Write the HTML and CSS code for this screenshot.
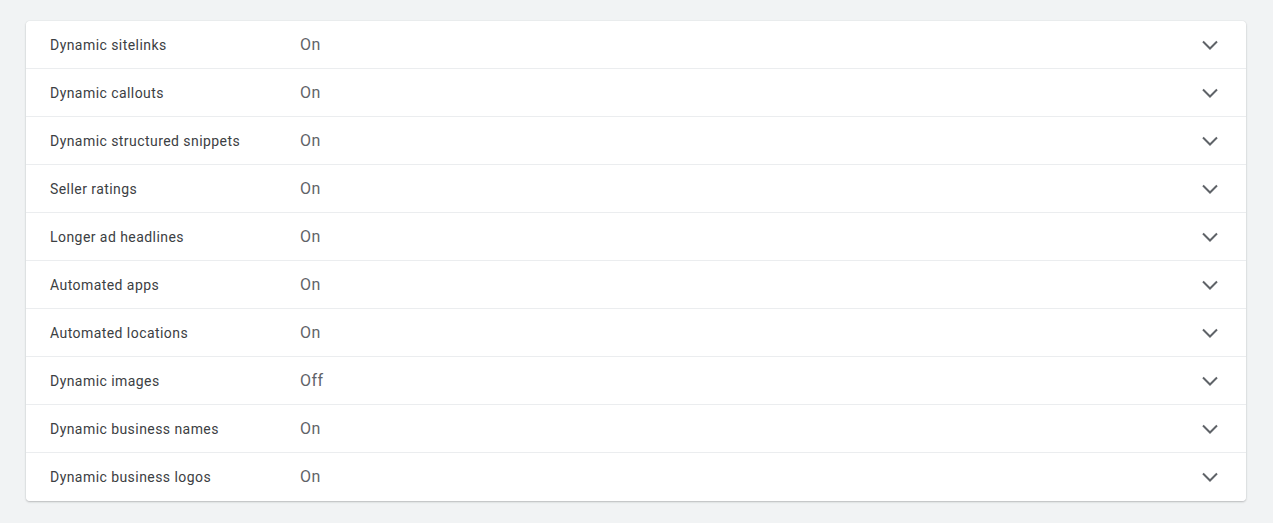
FILE: index.html
```html
<!DOCTYPE html>
<html>
<head>
<meta charset="utf-8">
<link rel="stylesheet" href="styles.css">
</head>
<body>
<div class="panels">
  <div class="row"><span class="label">Dynamic sitelinks</span><span class="value">On</span><svg class="chev" viewBox="0 0 24 24"><polyline points="5,8.5 12,15.5 19,8.5"/></svg></div>
  <div class="row"><span class="label">Dynamic callouts</span><span class="value">On</span><svg class="chev" viewBox="0 0 24 24"><polyline points="5,8.5 12,15.5 19,8.5"/></svg></div>
  <div class="row"><span class="label">Dynamic structured snippets</span><span class="value">On</span><svg class="chev" viewBox="0 0 24 24"><polyline points="5,8.5 12,15.5 19,8.5"/></svg></div>
  <div class="row"><span class="label">Seller ratings</span><span class="value">On</span><svg class="chev" viewBox="0 0 24 24"><polyline points="5,8.5 12,15.5 19,8.5"/></svg></div>
  <div class="row"><span class="label">Longer ad headlines</span><span class="value">On</span><svg class="chev" viewBox="0 0 24 24"><polyline points="5,8.5 12,15.5 19,8.5"/></svg></div>
  <div class="row"><span class="label">Automated apps</span><span class="value">On</span><svg class="chev" viewBox="0 0 24 24"><polyline points="5,8.5 12,15.5 19,8.5"/></svg></div>
  <div class="row"><span class="label">Automated locations</span><span class="value">On</span><svg class="chev" viewBox="0 0 24 24"><polyline points="5,8.5 12,15.5 19,8.5"/></svg></div>
  <div class="row"><span class="label">Dynamic images</span><span class="value">Off</span><svg class="chev" viewBox="0 0 24 24"><polyline points="5,8.5 12,15.5 19,8.5"/></svg></div>
  <div class="row"><span class="label">Dynamic business names</span><span class="value">On</span><svg class="chev" viewBox="0 0 24 24"><polyline points="5,8.5 12,15.5 19,8.5"/></svg></div>
  <div class="row"><span class="label">Dynamic business logos</span><span class="value">On</span><svg class="chev" viewBox="0 0 24 24"><polyline points="5,8.5 12,15.5 19,8.5"/></svg></div>
</div>
</body>
</html>
```
FILE: styles.css
```css
html, body {
  margin: 0;
  background: #f1f3f4;
  font-family: Roboto, "Liberation Sans", Arial, sans-serif;
}
body {
  padding: 21px 27px 22px 26px;
}
.panels {
  display: flex;
  flex-direction: column;
  border-radius: 4px;
  box-shadow: 0 1px 2px rgba(60,64,67,.3), 0 0 1px rgba(60,64,67,.2);
}
.row {
  display: flex;
  align-items: center;
  height: 48px;
  padding: 0 24px 0 24px;
  background: #fff;
  box-shadow: inset 0 -1px 0 #ebedef;
}
.row:first-child {
  border-radius: 4px 4px 0 0;
}
.row:last-child {
  border-radius: 0 0 4px 4px;
  box-shadow: none;
}
.label {
  width: 250px;
  font-size: 14px;
  letter-spacing: 0.44px;
  color: #3c4043;
}
.value {
  flex: 1;
  font-size: 16px;
  letter-spacing: 0.5px;
  color: #5f6368;
  margin-bottom: 2px;
}
.chev {
  width: 24px;
  height: 24px;
  fill: none;
  stroke: #5f6368;
  stroke-width: 2;
}
```
